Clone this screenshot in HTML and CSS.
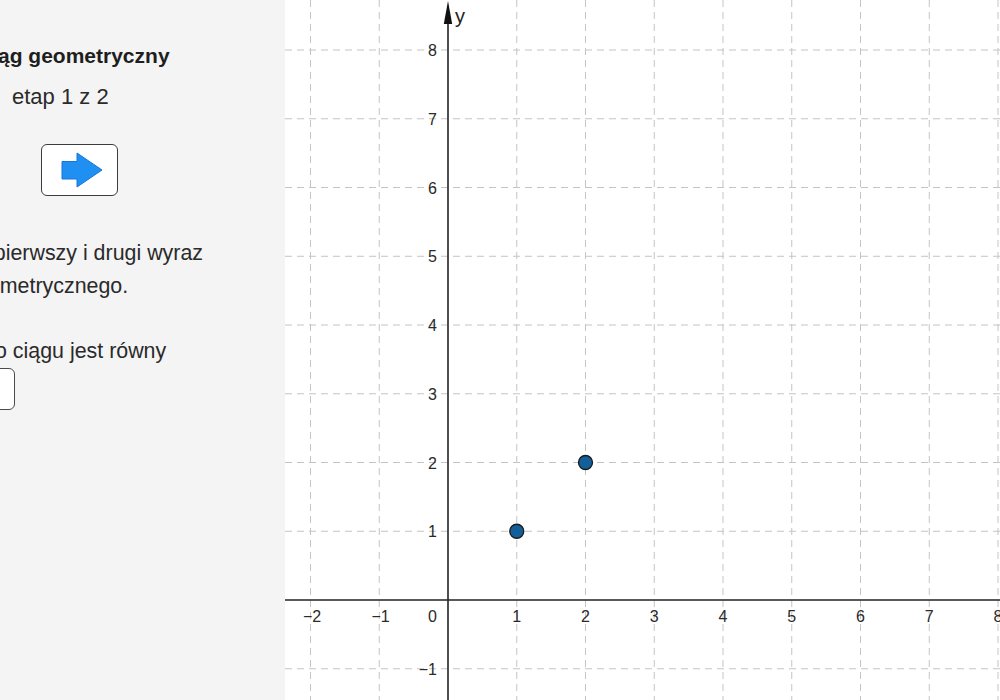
FILE: index.html
```html
<!DOCTYPE html>
<html>
<head lang="pl">
    <meta charset="UTF-8">
    <title>Ciąg geometryczny</title>
    <link rel="stylesheet" href="styles.css">
</head>
<body>
    <div class="panel">
        <div class="title">Ciąg geometryczny</div>
        <div class="step">etap 1 z 2</div>
        <button class="next" type="button">
            <svg width="42" height="36" viewBox="0 0 42 36">
                <path d="M1 9.5 H16 V1 L41 18 L16 35 V27 H1 Z" fill="#1f8ff2" stroke="#1677d6" stroke-width="1" stroke-linejoin="round"/>
            </svg>
        </button>
        <p class="task">Zaznacz pierwszy i drugi wyraz<br>ciągu geometrycznego.<br><br>Iloraz tego ciągu jest równy</p>
        <input class="answer" type="text">
    </div>
    <div class="graph">
        <svg width="715" height="700" viewBox="0 0 715 700">
            <!-- siatka co 1 jednostkę (68.75px), środek układu w (163, 600) -->
            <g class="grid">
                <line x1="25.5" y1="0" x2="25.5" y2="700"/>
                <line x1="94.25" y1="0" x2="94.25" y2="700"/>
                <line x1="231.75" y1="0" x2="231.75" y2="700"/>
                <line x1="300.5" y1="0" x2="300.5" y2="700"/>
                <line x1="369.25" y1="0" x2="369.25" y2="700"/>
                <line x1="438" y1="0" x2="438" y2="700"/>
                <line x1="506.75" y1="0" x2="506.75" y2="700"/>
                <line x1="575.5" y1="0" x2="575.5" y2="700"/>
                <line x1="644.25" y1="0" x2="644.25" y2="700"/>
                <line x1="713" y1="0" x2="713" y2="700"/>
                <line x1="0" y1="50" x2="715" y2="50"/>
                <line x1="0" y1="118.75" x2="715" y2="118.75"/>
                <line x1="0" y1="187.5" x2="715" y2="187.5"/>
                <line x1="0" y1="256.25" x2="715" y2="256.25"/>
                <line x1="0" y1="325" x2="715" y2="325"/>
                <line x1="0" y1="393.75" x2="715" y2="393.75"/>
                <line x1="0" y1="462.5" x2="715" y2="462.5"/>
                <line x1="0" y1="531.25" x2="715" y2="531.25"/>
                <line x1="0" y1="668.75" x2="715" y2="668.75"/>
            </g>
            <!-- osie -->
            <g class="axis">
                <line x1="0" y1="600" x2="715" y2="600"/>
                <line x1="163" y1="700" x2="163" y2="20"/>
            </g>
            <polygon class="arrow" points="163,1 158.8,24 167.2,24"/>
            <text class="axis-name" x="170" y="23">y</text>
            <g class="labels">
                <text x="152" y="56">8</text>
                <text x="152" y="124.75">7</text>
                <text x="152" y="193.5">6</text>
                <text x="152" y="262.25">5</text>
                <text x="152" y="331">4</text>
                <text x="152" y="399.75">3</text>
                <text x="152" y="468.5">2</text>
                <text x="152" y="537.25">1</text>
                <text x="152" y="622">0</text>
                <text x="152" y="674.75">−1</text>
            </g>
            <g class="labels xl">
                <text x="27" y="622">−2</text>
                <text x="95.5" y="622">−1</text>
                <text x="231.75" y="622">1</text>
                <text x="300.5" y="622">2</text>
                <text x="369.25" y="622">3</text>
                <text x="438" y="622">4</text>
                <text x="506.75" y="622">5</text>
                <text x="575.5" y="622">6</text>
                <text x="644.25" y="622">7</text>
                <text x="713" y="622">8</text>
            </g>
            <!-- wyrazy ciągu: (1, 1) i (2, 2) -->
            <circle class="pt" cx="231.75" cy="531.25" r="7"/>
            <circle class="pt" cx="300.5" cy="462.5" r="7"/>
        </svg>
    </div>
</body>
</html>
```
FILE: styles.css
```css
body{
    margin: 0;
    display: flex;
    font-family: "Liberation Sans", Arial, sans-serif;
    color: #2a2a2a;
}
.panel{
    width: 285px;
    height: 700px;
    flex: none;
    overflow: hidden;
    background: #f4f4f4;
    white-space: nowrap;
}
.title{
    margin: 44px 0 0 -23px;
    font-size: 21px;
    font-weight: bold;
    line-height: 24px;
    color: #1e1e1e;
}
.step{
    margin: 16px 0 0 12px;
    font-size: 22px;
    line-height: 26px;
}
.next{
    display: flex;
    align-items: center;
    justify-content: center;
    box-sizing: border-box;
    width: 77px;
    height: 52px;
    margin: 34px 0 0 41px;
    padding: 0 0 0 5px;
    background: #fff;
    border: 1.5px solid #3c3c3c;
    border-radius: 6px;
}
.next svg{
    display: block;
}
.task{
    margin: 41px 0 0 -93px;
    font-size: 21.4px;
    line-height: 32.5px;
}
.answer{
    display: block;
    box-sizing: border-box;
    width: 108px;
    height: 42px;
    margin: 1px 0 0 -93px;
    background: #fff;
    border: 1.5px solid #4a4a4a;
    border-radius: 6px;
}
.graph{
    flex: 1;
    height: 700px;
    overflow: hidden;
    background: #fff;
}
.graph svg{
    display: block;
}
.grid line{
    stroke: #c4c4c4;
    stroke-width: 1;
    stroke-dasharray: 7 5;
}
.axis line{
    stroke: #222;
    stroke-width: 1.6;
}
.arrow{
    fill: #111;
}
.axis-name{
    font-size: 20px;
    fill: #222;
}
.labels text{
    font-size: 16px;
    fill: #2a2a2a;
    text-anchor: end;
}
.labels.xl text{
    text-anchor: middle;
}
.pt{
    fill: #135f9a;
    stroke: #1a1a1a;
    stroke-width: 1.3;
}
```
